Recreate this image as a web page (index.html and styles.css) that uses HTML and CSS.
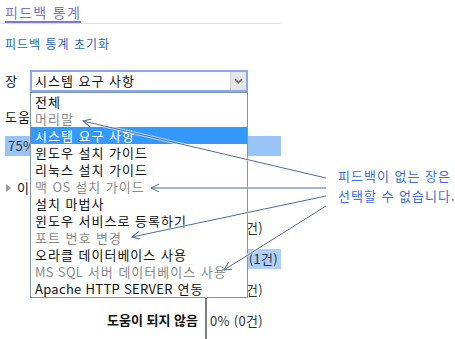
FILE: index.html
```html
<!DOCTYPE html>
<html lang="ko">
<head>
    <meta charset="UTF-8">
    <meta name="viewport" content="width=device-width, initial-scale=1.0">
    <title>피드백 통계</title>
    <link rel="stylesheet" href="styles.css">
</head>
<body>
    <div class="panel">
        <div class="page-head"><span class="page-title">피드백 통계</span></div>
        <a class="reset-link" href="#">피드백 통계 초기화</a>

        <div class="chapter-row">
            <span class="chapter-label">장</span>
            <div class="chapter-select">
                <span class="select-value">시스템 요구 사항</span>
                <span class="select-button">
                    <svg width="9" height="6" viewBox="0 0 9 6"><polyline points="1,1 4.5,4.5 8,1" fill="none" stroke="#666" stroke-width="1.6"/></svg>
                </span>
                <!-- opened option list -->
                <ul class="select-list">
                    <li>전체</li>
                    <li class="disabled">머리말</li>
                    <li class="selected">시스템 요구 사항</li>
                    <li>윈도우 설치 가이드</li>
                    <li>리눅스 설치 가이드</li>
                    <li class="disabled">맥 <span class="en">OS</span> 설치 가이드</li>
                    <li>설치 마법사</li>
                    <li>윈도우 서비스로 등록하기</li>
                    <li class="disabled">포트 번호 변경</li>
                    <li>오라클 데이터베이스 사용</li>
                    <li class="disabled"><span class="en">MS SQL</span> 서버 데이터베이스 사용</li>
                    <li><span class="en">Apache HTTP SERVER</span> 연동</li>
                </ul>
            </div>
        </div>

        <div class="question">도움이 되었습니까?</div>
        <div class="total-bar">75% (3건)</div>
        <div class="detail-toggle"><span class="toggle-arrow"></span>이 장의 응답 상세</div>

        <div class="answer-table">
            <div class="answer-row">
                <div class="answer-label">매우 도움이 됨</div>
                <div class="answer-value">0% (0건)</div>
            </div>
            <div class="answer-row">
                <div class="answer-label">도움이 됨</div>
                <div class="answer-value"><span class="answer-bar">100% (1건)</span></div>
            </div>
            <div class="answer-row">
                <div class="answer-label">보통</div>
                <div class="answer-value">0% (0건)</div>
            </div>
            <div class="answer-row last">
                <div class="answer-label">도움이 되지 않음</div>
                <div class="answer-value">0% (0건)</div>
            </div>
        </div>
    </div>

    <!-- annotation -->
    <div class="callout">피드백이 없는 장은<br>선택할 수 없습니다.</div>
    <svg class="callout-lines" width="455" height="339" viewBox="0 0 455 339">
        <defs>
            <marker id="tip" markerUnits="userSpaceOnUse" markerWidth="10" markerHeight="10" refX="9" refY="4" orient="auto">
                <polyline points="1,0 9,4 1,8" fill="none" stroke="#4f6d9c" stroke-width="1"/>
            </marker>
        </defs>
        <g class="halo">
            <line x1="326" y1="178" x2="83" y2="121"/>
            <line x1="326" y1="188" x2="151" y2="188"/>
            <line x1="326" y1="196" x2="132" y2="237"/>
            <line x1="326" y1="206" x2="224" y2="270"/>
        </g>
        <g class="pointer">
            <line x1="326" y1="178" x2="83" y2="121" marker-end="url(#tip)"/>
            <line x1="326" y1="188" x2="151" y2="188" marker-end="url(#tip)"/>
            <line x1="326" y1="196" x2="132" y2="237" marker-end="url(#tip)"/>
            <line x1="326" y1="206" x2="224" y2="270" marker-end="url(#tip)"/>
        </g>
    </svg>
</body>
</html>
```

FILE: styles.css
```css
/* General styles */
body {
    margin: 0;
    padding: 0;
    font-family: "Noto Sans CJK KR", "Noto Sans", sans-serif;
    font-size: 13px;
    letter-spacing: 1px;
    color: #111;
    background: #fff;
}
.panel {
    width: 281px;
}
.en {
    letter-spacing: 0.3px;
}

/* Header */
.page-head {
    padding-left: 5px;
    border-bottom: 1px solid #e2e0ee;
}
.page-title {
    display: inline-block;
    padding-top: 3px;
    font-size: 14px;
    line-height: 18px;
    letter-spacing: 1.3px;
    color: #7a78cc;
    border-bottom: 2px solid #7878e0;
}
.reset-link {
    display: block;
    margin: 12px 0 0 5px;
    font-size: 12px;
    line-height: 16px;
    color: #2a66b8;
    text-decoration: none;
}

/* Chapter select */
.chapter-row {
    display: flex;
    align-items: center;
    margin-top: 18px;
}
.chapter-label {
    width: 30px;
    padding-left: 5px;
    box-sizing: border-box;
    line-height: 18px;
}
.chapter-select {
    position: relative;
    display: flex;
    align-items: center;
    width: 218px;
    height: 22px;
    box-sizing: border-box;
    border: 2px solid #88a7f0;
}
.select-value {
    flex: 1;
    padding-left: 3px;
    line-height: 18px;
}
.select-button {
    display: flex;
    align-items: center;
    justify-content: center;
    width: 15px;
    height: 18px;
    background: #e6e6e6;
    border-left: 1px solid #d2d2d2;
}
.select-list {
    position: absolute;
    top: 20px;
    left: -2px;
    width: 218px;
    box-sizing: border-box;
    margin: 0;
    padding: 0;
    list-style: none;
    background: #fff;
    border: 1px solid #7f95ad;
    z-index: 2;
}
.select-list li {
    height: 17px;
    line-height: 17px;
    padding-left: 4px;
    white-space: nowrap;
}
.select-list .disabled {
    color: #8a8a8a;
}
.select-list .selected {
    background: #3399ff;
    color: #fff;
}

/* Stats */
.question {
    margin: 16px 0 0 5px;
    line-height: 18px;
}
.total-bar {
    margin: 10px 0 0 5px;
    height: 20px;
    line-height: 20px;
    padding-left: 3px;
    background: #99c5f6;
    color: #333;
    letter-spacing: 0.3px;
}
.detail-toggle {
    display: flex;
    align-items: center;
    margin: 23px 0 0 6px;
    line-height: 18px;
}
.toggle-arrow {
    width: 0;
    height: 0;
    margin-right: 6px;
    border-top: 4px solid transparent;
    border-bottom: 4px solid transparent;
    border-left: 5px solid #999;
}
.answer-table {
    margin-top: 15px;
}
.answer-row {
    display: flex;
    height: 31px;
}
.answer-row.last {
    height: 34px;
}
.answer-label {
    width: 205px;
    box-sizing: border-box;
    padding-right: 7px;
    text-align: right;
    font-weight: bold;
    letter-spacing: 0;
    line-height: 31px;
}
.answer-value {
    flex: 1;
    display: flex;
    align-items: center;
    border-left: 2px solid #7d7d7d;
    padding-left: 3px;
    color: #333;
    letter-spacing: 0.3px;
}
.answer-row.last .answer-label {
    line-height: 30px;
}
.answer-row.last .answer-value {
    align-items: flex-start;
    padding-top: 6px;
}
.answer-bar {
    display: block;
    width: 100%;
    margin-left: -3px;
    padding-left: 3px;
    height: 20px;
    line-height: 20px;
    background: #acd0f9;
}

/* Annotation */
.callout {
    position: absolute;
    left: 338px;
    top: 166px;
    font-size: 13px;
    line-height: 20px;
    color: #3b6fe0;
    white-space: nowrap;
}
.callout-lines {
    position: absolute;
    top: 0;
    left: 0;
    z-index: 3;
    pointer-events: none;
}
.callout-lines .halo line {
    stroke: #fff;
    stroke-width: 3;
    opacity: 0.6;
}
.callout-lines .pointer line {
    stroke: #4f6d9c;
    stroke-width: 1;
}
```
